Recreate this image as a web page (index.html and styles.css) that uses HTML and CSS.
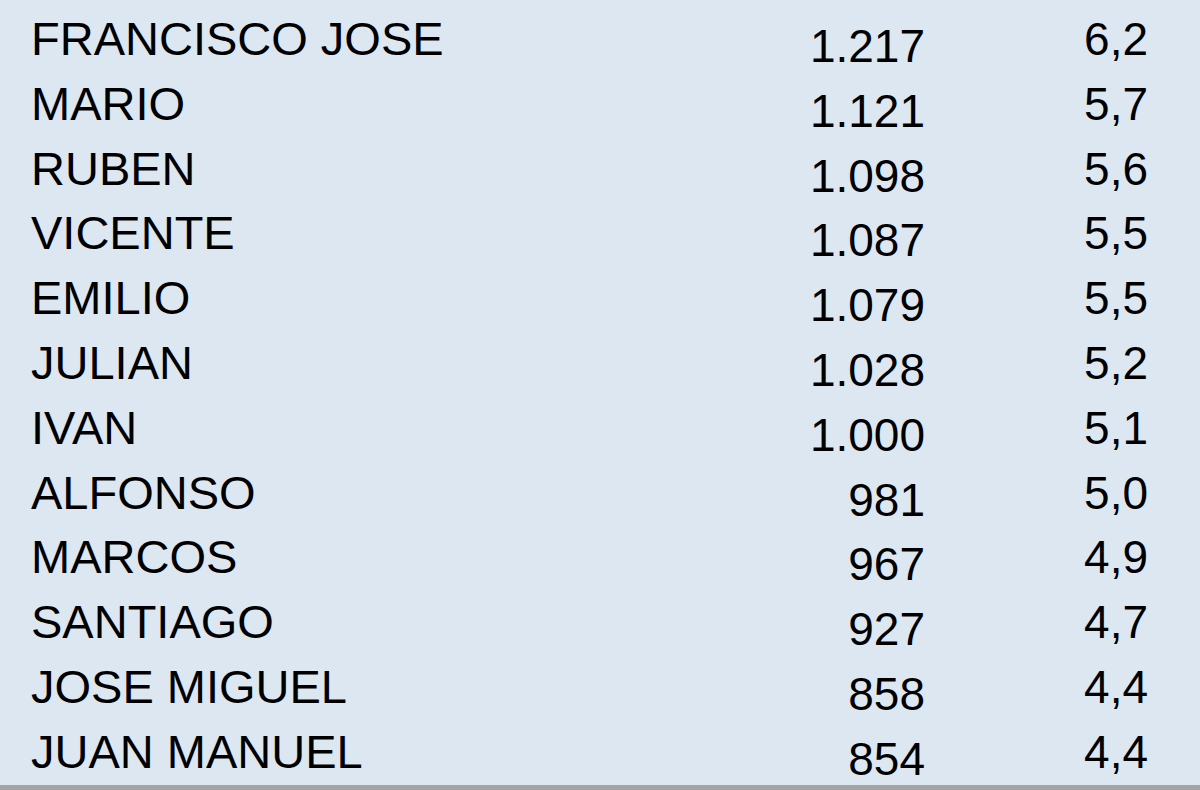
FILE: index.html
```html
<!DOCTYPE html>
<html lang="es">
<head>
<meta charset="utf-8">
<title>Nombres</title>
<link rel="stylesheet" href="styles.css">
</head>
<body>
<div class="page">
  <div class="table">
    <div class="name">FRANCISCO JOSE</div><div class="num">1.217</div><div class="pct">6,2</div>
    <div class="name">MARIO</div><div class="num">1.121</div><div class="pct">5,7</div>
    <div class="name">RUBEN</div><div class="num">1.098</div><div class="pct">5,6</div>
    <div class="name">VICENTE</div><div class="num">1.087</div><div class="pct">5,5</div>
    <div class="name">EMILIO</div><div class="num">1.079</div><div class="pct">5,5</div>
    <div class="name">JULIAN</div><div class="num">1.028</div><div class="pct">5,2</div>
    <div class="name">IVAN</div><div class="num">1.000</div><div class="pct">5,1</div>
    <div class="name">ALFONSO</div><div class="num">981</div><div class="pct">5,0</div>
    <div class="name">MARCOS</div><div class="num">967</div><div class="pct">4,9</div>
    <div class="name">SANTIAGO</div><div class="num">927</div><div class="pct">4,7</div>
    <div class="name">JOSE MIGUEL</div><div class="num">858</div><div class="pct">4,4</div>
    <div class="name">JUAN MANUEL</div><div class="num">854</div><div class="pct">4,4</div>
  </div>
  <div class="bar"></div>
</div>
</body>
</html>
```

FILE: styles.css
```css
html, body {
  margin: 0;
  padding: 0;
}
body {
  background: #dde7f2;
  font-family: "Liberation Sans", Arial, sans-serif;
  color: #000;
}
.page {
  width: 1200px;
  height: 790px;
  display: flex;
  flex-direction: column;
  overflow: hidden;
}
.table {
  flex: 1;
  display: grid;
  grid-template-columns: 1fr 200px 223px;
  grid-auto-rows: 64.8px;
  padding: 7px 52px 0 31px;
  font-size: 46px;
  line-height: 64.8px;
}
.name {
  white-space: nowrap;
  font-size: 47px;
}
.num {
  text-align: right;
  padding-top: 7px;
}
.pct {
  text-align: right;
}
.bar {
  height: 5px;
  background: #a4a4a4;
  flex: none;
}
```
